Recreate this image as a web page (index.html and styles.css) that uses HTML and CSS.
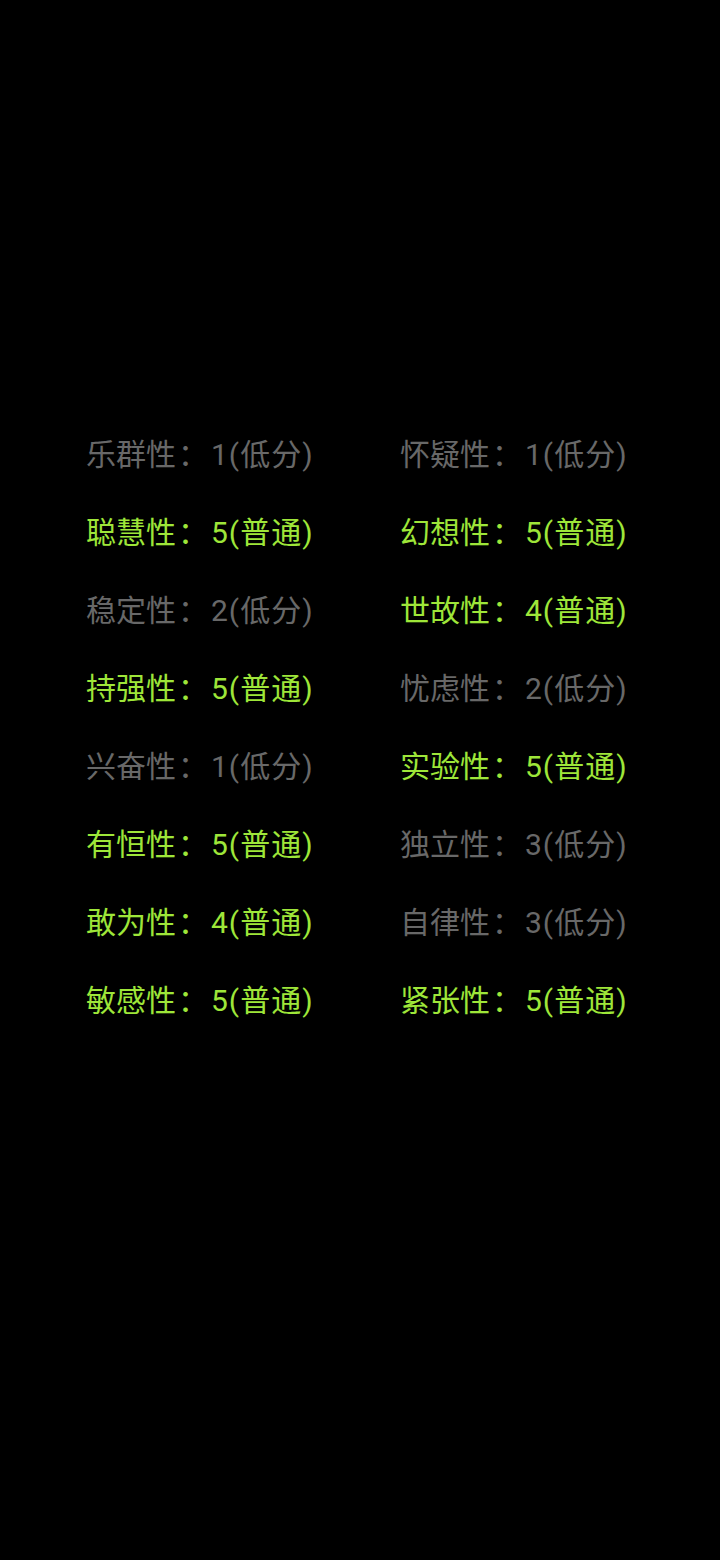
FILE: index.html
```html
<!DOCTYPE html>
<html lang="zh-CN">
<head>
    <meta charset="UTF-8">
    <meta name="viewport" content="width=device-width, initial-scale=1.0">
    <title>16PF</title>
    <link rel="stylesheet" href="styles.css">
</head>
<body>
    <div class="result-grid">
        <div class="item low">乐群性<span class="sep">：</span><span class="val">1(低分)</span></div>
        <div class="item low">怀疑性<span class="sep">：</span><span class="val">1(低分)</span></div>
        <div class="item normal">聪慧性<span class="sep">：</span><span class="val">5(普通)</span></div>
        <div class="item normal">幻想性<span class="sep">：</span><span class="val">5(普通)</span></div>
        <div class="item low">稳定性<span class="sep">：</span><span class="val">2(低分)</span></div>
        <div class="item normal">世故性<span class="sep">：</span><span class="val">4(普通)</span></div>
        <div class="item normal">持强性<span class="sep">：</span><span class="val">5(普通)</span></div>
        <div class="item low">忧虑性<span class="sep">：</span><span class="val">2(低分)</span></div>
        <div class="item low">兴奋性<span class="sep">：</span><span class="val">1(低分)</span></div>
        <div class="item normal">实验性<span class="sep">：</span><span class="val">5(普通)</span></div>
        <div class="item normal">有恒性<span class="sep">：</span><span class="val">5(普通)</span></div>
        <div class="item low">独立性<span class="sep">：</span><span class="val">3(低分)</span></div>
        <div class="item normal">敢为性<span class="sep">：</span><span class="val">4(普通)</span></div>
        <div class="item low">自律性<span class="sep">：</span><span class="val">3(低分)</span></div>
        <div class="item normal">敏感性<span class="sep">：</span><span class="val">5(普通)</span></div>
        <div class="item normal">紧张性<span class="sep">：</span><span class="val">5(普通)</span></div>
    </div>
</body>
</html>
```

FILE: styles.css
```css
:root {
    --normal-color: #9ee639;
    --low-color: #686868;
}

html, body {
    margin: 0;
    padding: 0;
    background-color: #000;
}

body {
    font-family: Roboto, "Noto Sans CJK SC", sans-serif;
    min-height: 1560px;
}

.result-grid {
    display: grid;
    grid-template-columns: 314px 1fr;
    grid-auto-rows: 78px;
    padding: 416px 0 0 86px;
}

.item {
    font-size: 30px;
    line-height: 78px;
    white-space: nowrap;
}

.sep {
    display: inline-block;
    width: 33px;
    padding-left: 2px;
}

.val {
    letter-spacing: 1px;
}

.low {
    color: var(--low-color);
}

.normal {
    color: var(--normal-color);
}
```
